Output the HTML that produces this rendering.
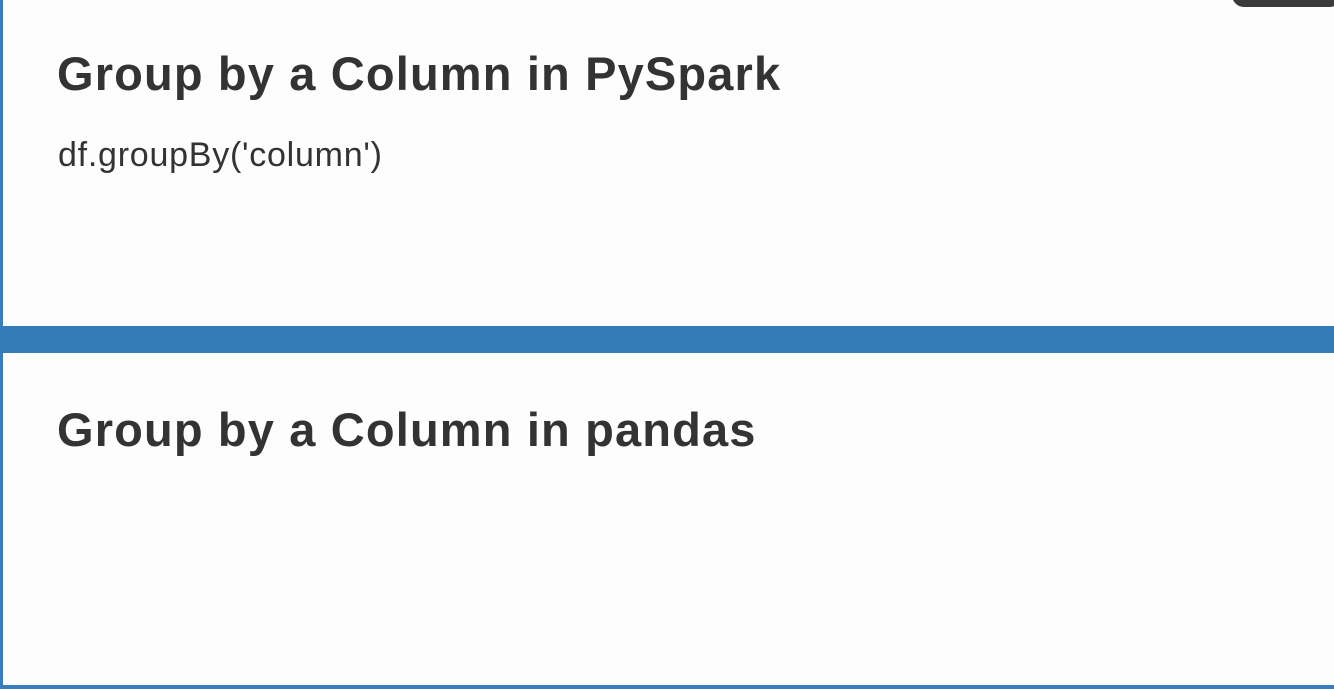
<!DOCTYPE html>
<html><head><meta charset="utf-8"><style>
html,body{margin:0;padding:0;}
body{width:1334px;height:689px;position:relative;overflow:hidden;background:#fdfdfd;font-family:"Liberation Sans",sans-serif;}
.lb{position:absolute;left:0;width:3px;background:#3a7cc0;}
.h{position:absolute;left:57px;font-size:47px;font-weight:bold;color:#333;letter-spacing:1.15px;margin:0;line-height:1;}
.code{position:absolute;left:58px;top:138px;font-size:34px;color:#333;line-height:1;letter-spacing:0.75px;}
.bar{position:absolute;left:0;top:326px;width:1334px;height:27px;background:#337ab8;}
.bot{position:absolute;left:0;top:685px;width:1334px;height:4px;background:#3a7cc0;}
.dark{position:absolute;left:1232px;top:-20px;width:110px;height:27px;background:#3b3b3b;border-radius:12px;}
</style></head><body>
<div class="lb" style="top:0;height:326px"></div>
<div class="lb" style="top:353px;height:336px"></div>
<div class="dark"></div>
<div class="h" style="top:50px">Group by a Column in PySpark</div>
<div class="code">df.groupBy('column')</div>
<div class="bar"></div>
<div class="h" style="top:406px">Group by a Column in pandas</div>
<div class="bot"></div>
</body></html>
